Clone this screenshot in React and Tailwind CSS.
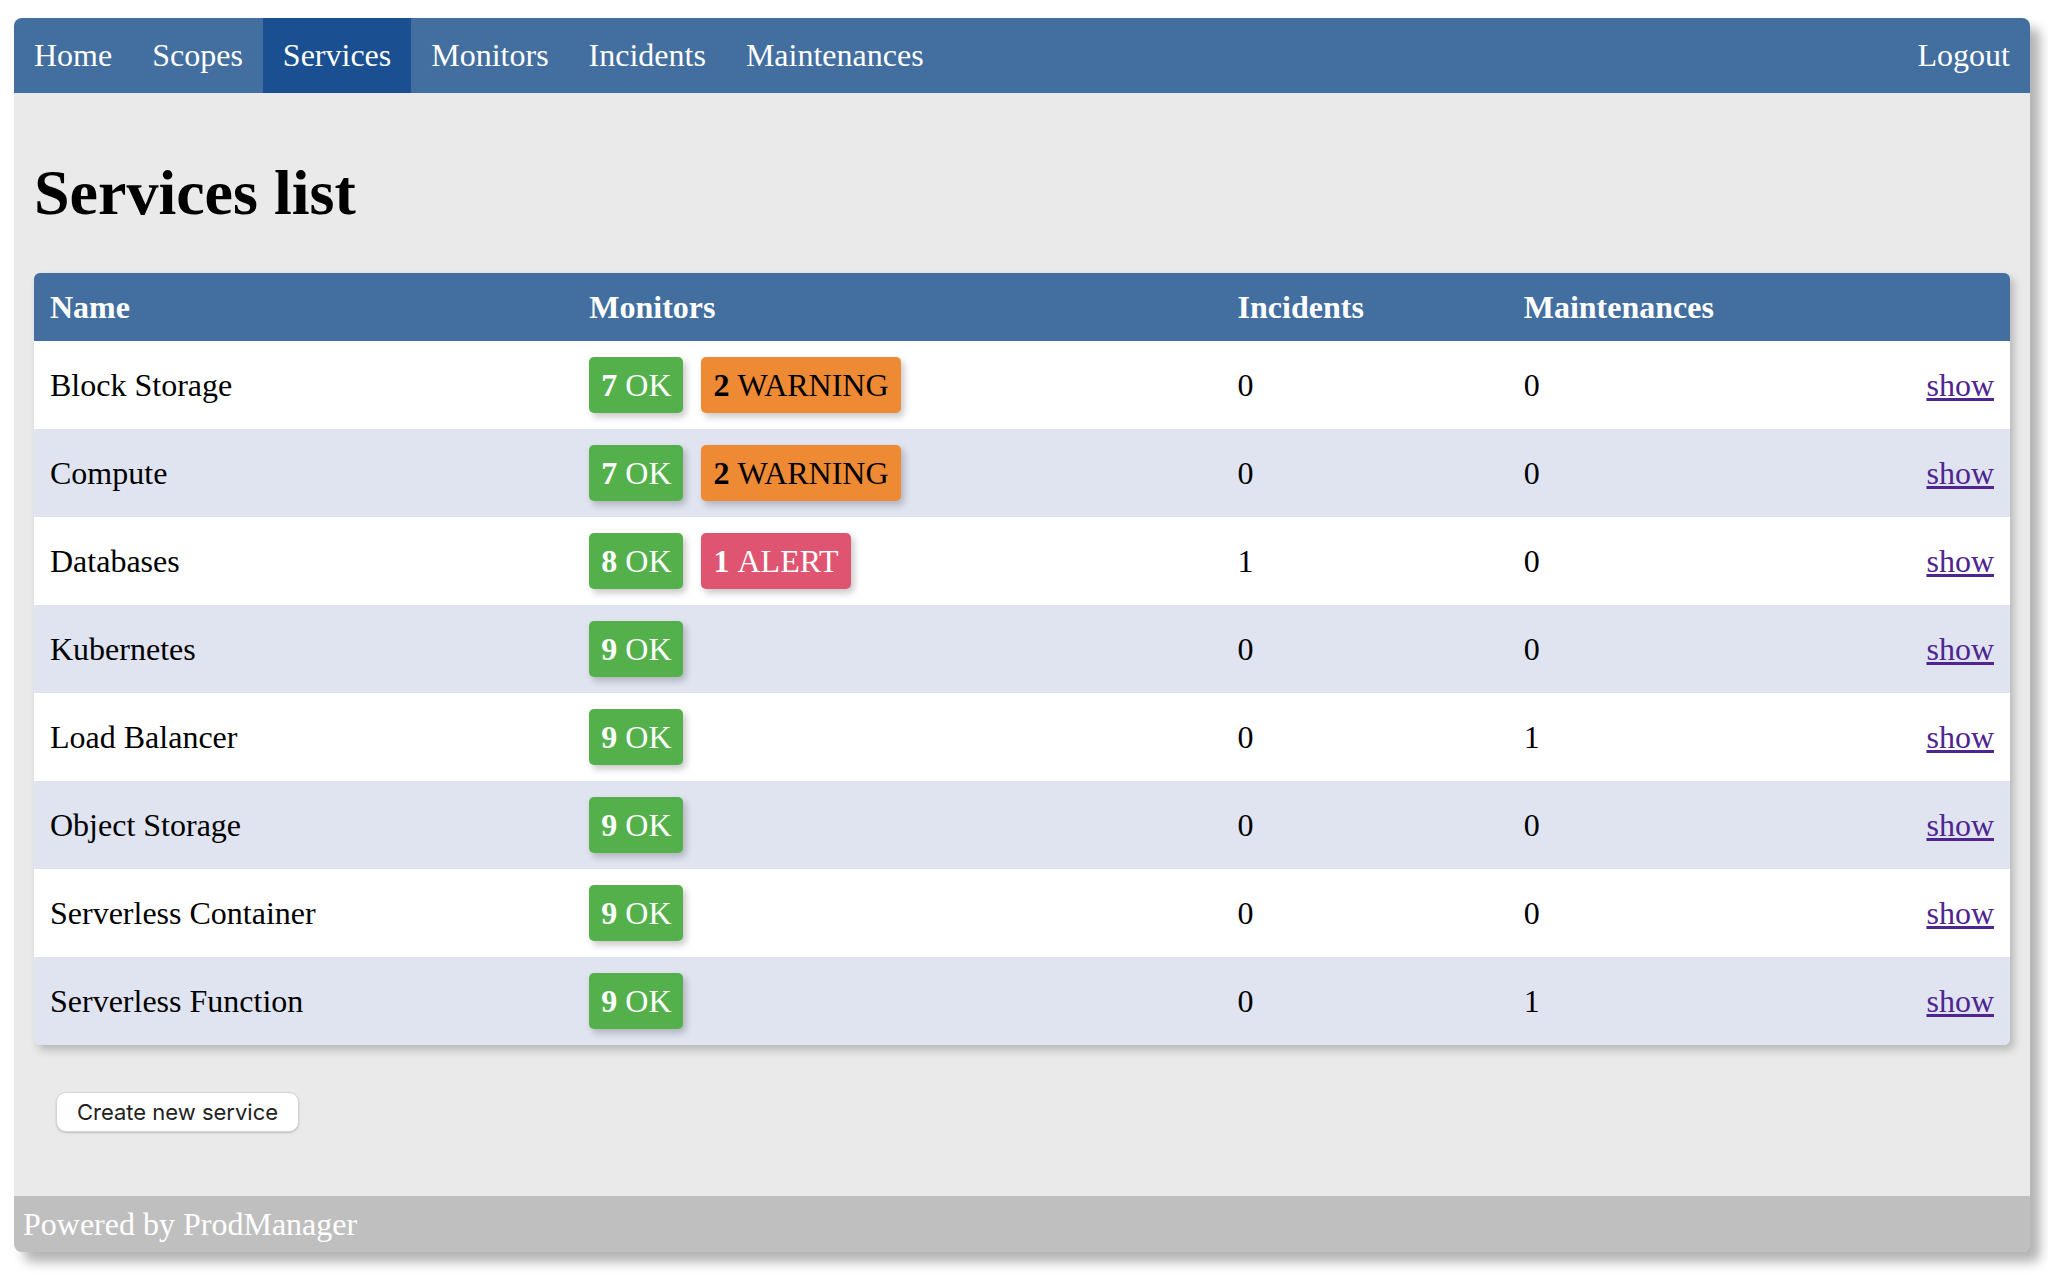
const services = [
  { name: 'Block Storage', badges: [['7', 'OK', 'ok'], ['2', 'WARNING', 'warn']], incidents: 0, maintenances: 0 },
  { name: 'Compute', badges: [['7', 'OK', 'ok'], ['2', 'WARNING', 'warn']], incidents: 0, maintenances: 0 },
  { name: 'Databases', badges: [['8', 'OK', 'ok'], ['1', 'ALERT', 'alert']], incidents: 1, maintenances: 0 },
  { name: 'Kubernetes', badges: [['9', 'OK', 'ok']], incidents: 0, maintenances: 0 },
  { name: 'Load Balancer', badges: [['9', 'OK', 'ok']], incidents: 0, maintenances: 1 },
  { name: 'Object Storage', badges: [['9', 'OK', 'ok']], incidents: 0, maintenances: 0 },
  { name: 'Serverless Container', badges: [['9', 'OK', 'ok']], incidents: 0, maintenances: 0 },
  { name: 'Serverless Function', badges: [['9', 'OK', 'ok']], incidents: 0, maintenances: 1 },
];

const navItems = ['Home', 'Scopes', 'Services', 'Monitors', 'Incidents', 'Maintenances'];

const badgeStyles = {
  ok: 'bg-[#53b04a] text-white',
  warn: 'bg-[#ee8a34] text-black',
  alert: 'bg-[#df5571] text-white',
};

function Badge({ count, label, kind }) {
  return (
    <span className={`inline-flex h-[56px] items-center px-[12px] rounded-[5px] shadow-[3px_4px_7px_rgba(0,0,0,0.22)] ${badgeStyles[kind]}`}>
      <b>{count}</b>&nbsp;{label}
    </span>
  );
}

export default function App() {
  return (
    <div className="min-h-screen bg-white pt-[18px] pl-[14px] pb-[24px] font-['Liberation_Serif',serif] text-[32px] leading-[37px]">
      <div className="w-[2016px] rounded-[8px] overflow-hidden bg-[#eaeaea] shadow-[10px_10px_12px_rgba(0,0,0,0.3)]">
        {/* Nav */}
        <nav className="flex h-[75px] bg-[#436ea0] text-white">
          {navItems.map((item) => (
            <a
              key={item}
              className={`flex items-center px-[20px] ${item === 'Services' ? 'bg-[#1a4f91]' : ''}`}
            >
              {item}
            </a>
          ))}
          <a className="ml-auto flex items-center px-[20px]">Logout</a>
        </nav>

        {/* Content */}
        <div className="px-[20px] pt-[20px]">
          <h1 className="my-[43px] text-[64px] leading-[74px] font-bold">Services list</h1>

          <div className="rounded-[6px] overflow-hidden shadow-[4px_5px_8px_rgba(0,0,0,0.22)]">
            <table className="w-full table-fixed border-collapse">
              <colgroup>
                <col className="w-[539px]" />
                <col className="w-[648px]" />
                <col className="w-[286px]" />
                <col className="w-[402px]" />
                <col className="w-[100px]" />
              </colgroup>
              <thead>
                <tr className="h-[68px] bg-[#436ea0] text-white text-left">
                  <th className="px-[16px]">Name</th>
                  <th className="px-[16px]">Monitors</th>
                  <th className="px-[16px]">Incidents</th>
                  <th className="px-[16px]">Maintenances</th>
                  <th className="px-[16px]"></th>
                </tr>
              </thead>
              <tbody>
                {services.map((s, i) => (
                  <tr key={s.name} className={`h-[88px] ${i % 2 === 1 ? 'bg-[#e0e4f0]' : 'bg-white'}`}>
                    <td className="px-[16px]">{s.name}</td>
                    <td className="px-[16px]">
                      <div className="flex gap-[18px]">
                        {s.badges.map(([c, l, k]) => (
                          <Badge key={l} count={c} label={l} kind={k} />
                        ))}
                      </div>
                    </td>
                    <td className="px-[16px]">{s.incidents}</td>
                    <td className="px-[16px]">{s.maintenances}</td>
                    <td className="px-[16px] text-right">
                      <a className="text-[#4f2590] underline">show</a>
                    </td>
                  </tr>
                ))}
              </tbody>
            </table>
          </div>

          <div className="mt-[46px] ml-[22px]">
            <button className="h-[40px] w-[243px] rounded-[10px] bg-white border border-[#d4d4d4] shadow-[0_1px_2px_rgba(0,0,0,0.2)] font-['Inter',sans-serif] text-[22px] leading-none text-[#222]">
              Create new service
            </button>
          </div>
        </div>

        {/* Footer */}
        <footer className="mt-[64px] flex h-[56px] items-center bg-[#bfbfbf] px-[9px] text-white">
          Powered by ProdManager
        </footer>
      </div>
    </div>
  );
}
